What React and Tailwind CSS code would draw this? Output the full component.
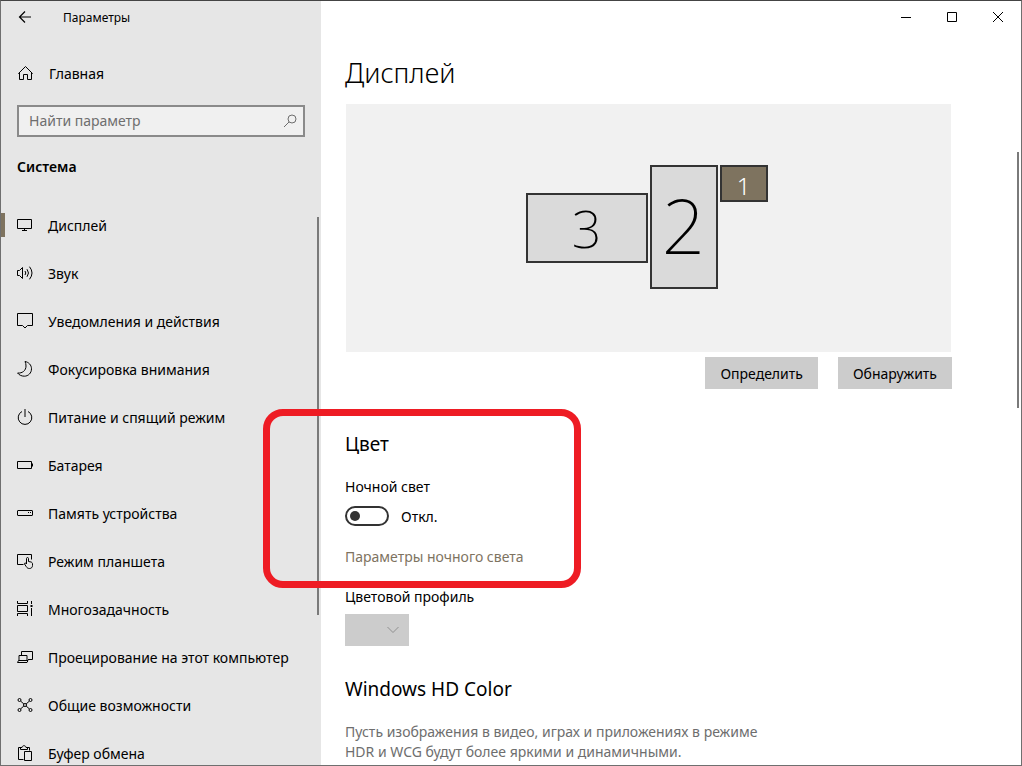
import React, { useState } from 'react';

const navItems = [
    { id: 'display', label: 'Дисплей' },
    { id: 'sound', label: 'Звук' },
    { id: 'notifications', label: 'Уведомления и действия' },
    { id: 'focus', label: 'Фокусировка внимания' },
    { id: 'power', label: 'Питание и спящий режим' },
    { id: 'battery', label: 'Батарея' },
    { id: 'storage', label: 'Память устройства' },
    { id: 'tablet', label: 'Режим планшета' },
    { id: 'multitask', label: 'Многозадачность' },
    { id: 'projecting', label: 'Проецирование на этот компьютер' },
    { id: 'shared', label: 'Общие возможности' },
    { id: 'clipboard', label: 'Буфер обмена' }
];

// All icons are drawn on a 16px grid
const iconShapes = {
    home: (
        <>
            <path d="M1.300 8.700 8.500 1.500l7.200 7.200" />
            <path d="M2.500 7.500v7h4v-5h4v5h4v-7" />
        </>
    ),
    display: (
        <>
            <path d="M.5 2.500h14v9H.5z" />
            <path d="M7.500 11.500v2M5 13.500h5" />
        </>
    ),
    sound: (
        <>
            <path d="M.5 5.500h2l3-3v11l-3-3h-2z" />
            <path d="M8 6q1.600 2 0 4M10 4.200q3 3.800 0 7.600M12.500 1.700q5 6.300 0 12.600" />
        </>
    ),
    notifications: <path d="M.5.5h15v12h-5L8 15l-2.500-2.500h-5z" />,
    focus: <path d="M8 .5c3.600.6 6.500 3.500 6.500 7.300 0 4.200-3.200 7.400-7.200 7.400-2.800 0-5.200-1.200-6.700-3.200 4.700.5 8.400-2.400 8.400-7C9 3.200 8.700 1.800 8 .5z" />,
    power: (
        <>
            <path d="M5 2.500A6.800 6.800 0 1 0 11 2.500" />
            <path d="M8 0v8" />
        </>
    ),
    battery: (
        <>
            <path d="M.5 4.500h14v7H.5z" />
            <path d="M15.500 6.500v3" />
        </>
    ),
    storage: (
        <>
            <rect x=".5" y="5.500" width="15" height="5" rx=".5" />
            <path d="M11 7.500h1M13 7.500h1" />
        </>
    ),
    tablet: (
        <>
            <path d="M6.500 11.500h-6v-10h14v5" />
            <path d="M9.500 11V5.500c0-1.300 2-1.300 2 0v3l2.500.5c1 .3 1.500 1 1.500 2v1.500c0 1.800-1.200 3-3 3-1.600 0-2.400-.6-3.200-1.800l-1.800-2.700c-.3-1.200 1-1.400 2 0z" />
        </>
    ),
    multitask: (
        <>
            <path d="M.5 0v2.500h10V0M.5 4.500h10v6H.5zM.5 15v-2.500h10V15" />
            <path d="M14.500 0v3M14.500 7v8" />
            <path d="M13.500 4h2v2h-2z" fill="currentColor" stroke="none" />
        </>
    ),
    projecting: (
        <>
            <path d="M4.500 6V2.500h11v8H11" />
            <path d="M2 11.500v-5h8v5M.5 13.500l1-2h9.500l-1 2z" />
        </>
    ),
    shared: (
        <>
            <circle cx="2.500" cy="3" r="1.500" />
            <circle cx="13.500" cy="3" r="1.500" />
            <circle cx="2.500" cy="13" r="1.500" />
            <circle cx="13.500" cy="13" r="1.500" />
            <circle cx="8" cy="8" r="1.500" />
            <path d="M3.600 4.100 6.900 7M12.400 4.100 9.100 7M3.600 11.900 6.900 9M12.400 11.900 9.100 9" />
        </>
    ),
    clipboard: (
        <>
            <path d="M6.500 14.500h-5v-12h3M9.500 2.500h3v3" />
            <path d="M3.500 4.500v-2H5c.3-2.400 3.700-2.400 4 0h1.500v2z" />
            <path d="M7.500 6.500h7v9h-7z" />
        </>
    )
};

const Icon = ({ name }) => (
    <svg viewBox="0 0 16 16" className="size-4 shrink-0" fill="none" stroke="currentColor" strokeWidth="1" aria-hidden="true">
        {iconShapes[name]}
    </svg>
);

const Sidebar = () => {
    const [active, setActive] = useState('display');
    const [query, setQuery] = useState('');

    return (
        <aside className="relative flex w-80 shrink-0 flex-col bg-[#e6e6e6]">
            <header className="flex h-8 shrink-0 items-center">
                <button aria-label="Назад" className="flex h-8 w-12 items-center justify-center">
                    <svg viewBox="0 0 16 16" className="size-4" fill="none" stroke="currentColor" strokeWidth="1.2" aria-hidden="true">
                        <path d="M14 8H2.500M8 2.500 2.500 8 8 13.500" />
                    </svg>
                </button>
                <span className="ml-3.5 pt-0.5 text-xs">Параметры</span>
            </header>

            <a href="#home" className="mt-4 flex h-12 shrink-0 items-center gap-4 pl-4">
                <Icon name="home" />
                <span className="pt-0.5">Главная</span>
            </a>

            <label className="mx-4 mt-2 flex h-8 shrink-0 items-center border-2 border-[#8a8a8a] bg-[#f0f0f0] pr-1 pl-2.5">
                <input
                    type="text"
                    aria-label="Найти параметр"
                    placeholder="Найти параметр"
                    value={query}
                    onChange={(e) => setQuery(e.target.value)}
                    className="min-w-0 flex-1 bg-transparent outline-none placeholder:text-[#6e6e6e]"
                />
                <svg viewBox="0 0 16 16" className="size-4 shrink-0 text-[#6e6e6e]" fill="none" stroke="currentColor" aria-hidden="true">
                    <circle cx="9" cy="6" r="4" />
                    <path d="M6 9 1 14" />
                </svg>
            </label>

            <h2 className="mt-5 ml-4 shrink-0 leading-5 font-semibold">Система</h2>

            <nav className="mt-6 min-h-0 flex-1 overflow-hidden">
                {navItems.map((item) => (
                    <a
                        key={item.id}
                        href={`#${item.id}`}
                        onClick={() => setActive(item.id)}
                        className="flex h-12 items-center"
                    >
                        <span className={active === item.id ? 'h-6 w-1 bg-[#7e735f]' : 'h-6 w-1'} />
                        <span className="ml-3 flex items-center gap-[15px]">
                            <Icon name={item.id} />
                            <span className="pt-0.5 whitespace-nowrap">{item.label}</span>
                        </span>
                    </a>
                ))}
            </nav>

            {/* Scroll thumb */}
            <div className="absolute top-54 right-0.5 h-[398px] w-0.5 bg-[#7a7a7a]" />
        </aside>
    );
};

const WindowControls = () => (
    <div className="flex h-8 shrink-0 justify-end">
        <button aria-label="Свернуть" className="flex w-[46px] items-center justify-center">
            <svg viewBox="0 0 10 10" className="size-2.5" stroke="currentColor" aria-hidden="true">
                <path d="M0 5.500h10" />
            </svg>
        </button>
        <button aria-label="Развернуть" className="flex w-[46px] items-center justify-center">
            <svg viewBox="0 0 10 10" className="size-2.5" fill="none" stroke="currentColor" aria-hidden="true">
                <path d="M.5.5h9v9h-9z" />
            </svg>
        </button>
        <button aria-label="Закрыть" className="flex w-[46px] items-center justify-center">
            <svg viewBox="0 0 10 10" className="size-2.5" stroke="currentColor" aria-hidden="true">
                <path d="m0 0 10 10M10 0 0 10" />
            </svg>
        </button>
    </div>
);

const MonitorPreview = () => (
    <div className="flex h-[248px] items-center justify-center bg-[#f1f1f1] pr-1 pb-0.5">
        <div className="flex items-start gap-0.5">
            <button className="mt-7 flex h-[70px] w-[122px] items-center justify-center border-2 border-[#333] bg-[#dadada] text-[52px] leading-none font-extralight">
                3
            </button>
            <button className="flex h-[124px] w-[68px] items-center justify-center border-2 border-[#333] bg-[#dadada] pb-1 text-[76px] leading-none font-extralight">
                2
            </button>
            <button className="flex h-[37px] w-12 items-center justify-center border-2 border-[#333] bg-[#7e735f] pt-1 text-2xl leading-none font-light text-white">
                1
            </button>
        </div>
    </div>
);

const DisplayPage = () => {
    const [nightLight, setNightLight] = useState(false);

    return (
        <main className="relative flex min-w-0 flex-1 flex-col bg-white">
            <WindowControls />

            <div className="min-h-0 flex-1 overflow-hidden pr-[69px] pl-6">
                <div className="max-w-[607px]">
                    <h1 className="mt-5 text-[27px] leading-10 font-light">Дисплей</h1>

                    <div className="mt-[11px] px-px">
                        <MonitorPreview />
                    </div>

                    <div className="mt-[5px] flex justify-end gap-5">
                        <button className="h-8 bg-[#ccc] px-[15px] pt-0.5">Определить</button>
                        <button className="h-8 bg-[#ccc] px-[15px] pt-0.5">Обнаружить</button>
                    </div>

                    <section className="mt-[41px]">
                        <h2 className="text-[19px] leading-7">Цвет</h2>
                        <p id="night-light" className="mt-[19px] leading-5">Ночной свет</p>
                        <label className="mt-[7px] flex h-6 w-fit items-center gap-3">
                            <input
                                type="checkbox"
                                role="switch"
                                aria-labelledby="night-light"
                                checked={nightLight}
                                onChange={(e) => setNightLight(e.target.checked)}
                                className="flex h-5 w-11 appearance-none items-center rounded-full border-2 border-[#333] px-[3px] before:size-2.5 before:rounded-full before:bg-[#333] checked:justify-end"
                            />
                            <span className="pt-0.5">{nightLight ? 'Вкл.' : 'Откл.'}</span>
                        </label>
                        <a href="#night-light-settings" className="mt-[19px] block w-fit leading-5 text-[#7e735f]">
                            Параметры ночного света
                        </a>

                        <label htmlFor="color-profile" className="mt-5 block leading-5">Цветовой профиль</label>
                        <div className="relative mt-[7px] h-8 w-16">
                            <select id="color-profile" disabled className="h-8 w-16 appearance-none bg-[#ccc]" />
                            <svg viewBox="0 0 12 12" className="pointer-events-none absolute top-2.5 right-2.5 size-3" fill="none" stroke="#8f8f8f" aria-hidden="true">
                                <path d="m.5 3 5.500 5.500L11.500 3" />
                            </svg>
                        </div>
                    </section>

                    <section className="mt-[29px]">
                        <h2 className="text-[19px] leading-7">Windows HD Color</h2>
                        <p className="mt-[19px] max-w-[440px] leading-5 text-[#6e6e6e]">
                            Пусть изображения в видео, играх и приложениях в режиме HDR и WCG будут более яркими и динамичными.
                        </p>
                    </section>
                </div>
            </div>

            {/* Scroll thumb */}
            <div className="absolute top-[151px] right-0.5 h-64 w-0.5 bg-[#7a7a7a]" />
        </main>
    );
};

const App = () => (
    <div className="relative flex h-screen overflow-hidden border border-[#6f6f6f] border-t-[#444] font-['Noto_Sans','Open_Sans',sans-serif] text-sm text-black">
        <Sidebar />
        <DisplayPage />

        {/* Highlight around the night light block */}
        <div className="pointer-events-none absolute top-[408px] left-[262px] h-[179px] w-[318px] rounded-[20px] border-7 border-[#ee1c24]" />
    </div>
);

export default App;
